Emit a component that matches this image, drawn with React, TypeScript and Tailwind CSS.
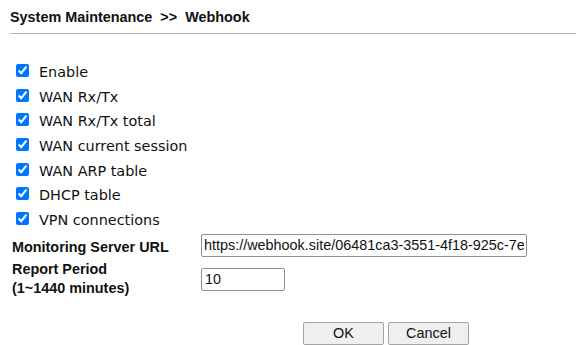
import { useState } from 'react';

// Webhook settings page
const items = [
  'Enable',
  'WAN Rx/Tx',
  'WAN Rx/Tx total',
  'WAN current session',
  'WAN ARP table',
  'DHCP table',
  'VPN connections',
];

const App = () => {
  const [url, setUrl] = useState('https://webhook.site/06481ca3-3551-4f18-925c-7e2b1f0a9d34');
  const [period, setPeriod] = useState('10');

  return (
    <div className="w-[576px] h-[345px] overflow-hidden bg-white text-[#111] font-['Liberation_Sans',Arial,sans-serif]">
      {/* Header */}
      <div className="ml-[10px] h-[34px] pt-[7px] border-b border-[#b4b4b4]">
        <h1 className="text-[14.4px] leading-5 font-bold whitespace-pre">System Maintenance  &gt;&gt;  Webhook</h1>
      </div>

      {/* Checkbox list */}
      <div className="mt-[24px] pl-4 flex flex-col font-['DejaVu_Sans',Verdana,sans-serif] text-[14.4px]">
        {items.map((item) => (
          <label key={item} className="h-[24.7px] flex items-center gap-[10px]">
            <input type="checkbox" defaultChecked className="w-[13px] h-[13px] accent-[#0075ff]" />
            <span className="leading-4 pt-[3px]">{item}</span>
          </label>
        ))}
      </div>

      {/* Form fields */}
      <div className="mt-[3px] pl-[12px] flex flex-col text-[14.4px] font-bold">
        <div className="flex">
          <div className="w-[189px] pt-[5px] leading-4">Monitoring Server URL</div>
          <input
            value={url}
            onChange={(e) => setUrl(e.target.value)}
            className="w-[326px] h-[23px] px-[2px] border border-[#8f8f8f] rounded-[2px] text-[14.4px] font-normal font-['Liberation_Sans',Arial,sans-serif]"
          />
        </div>
        <div className="flex">
          <div className="w-[189px] pt-[3px] leading-[19px]">
            Report Period
            <br />
            (1~1440 minutes)
          </div>
          <input
            value={period}
            onChange={(e) => setPeriod(e.target.value)}
            className="mt-[11px] w-[84px] h-[23px] px-[3px] border border-[#8f8f8f] rounded-[2px] text-[14.4px] font-normal"
          />
        </div>
      </div>

      {/* Buttons */}
      <div className="mt-[24px] pl-[303px] flex gap-[4px] text-[14.4px]">
        <button className="w-[81px] h-[23px] bg-[#efefef] border border-[#a3a3a3] rounded-[2px]">OK</button>
        <button className="w-[81px] h-[23px] bg-[#efefef] border border-[#a3a3a3] rounded-[2px]">Cancel</button>
      </div>
    </div>
  );
};

export default App;
